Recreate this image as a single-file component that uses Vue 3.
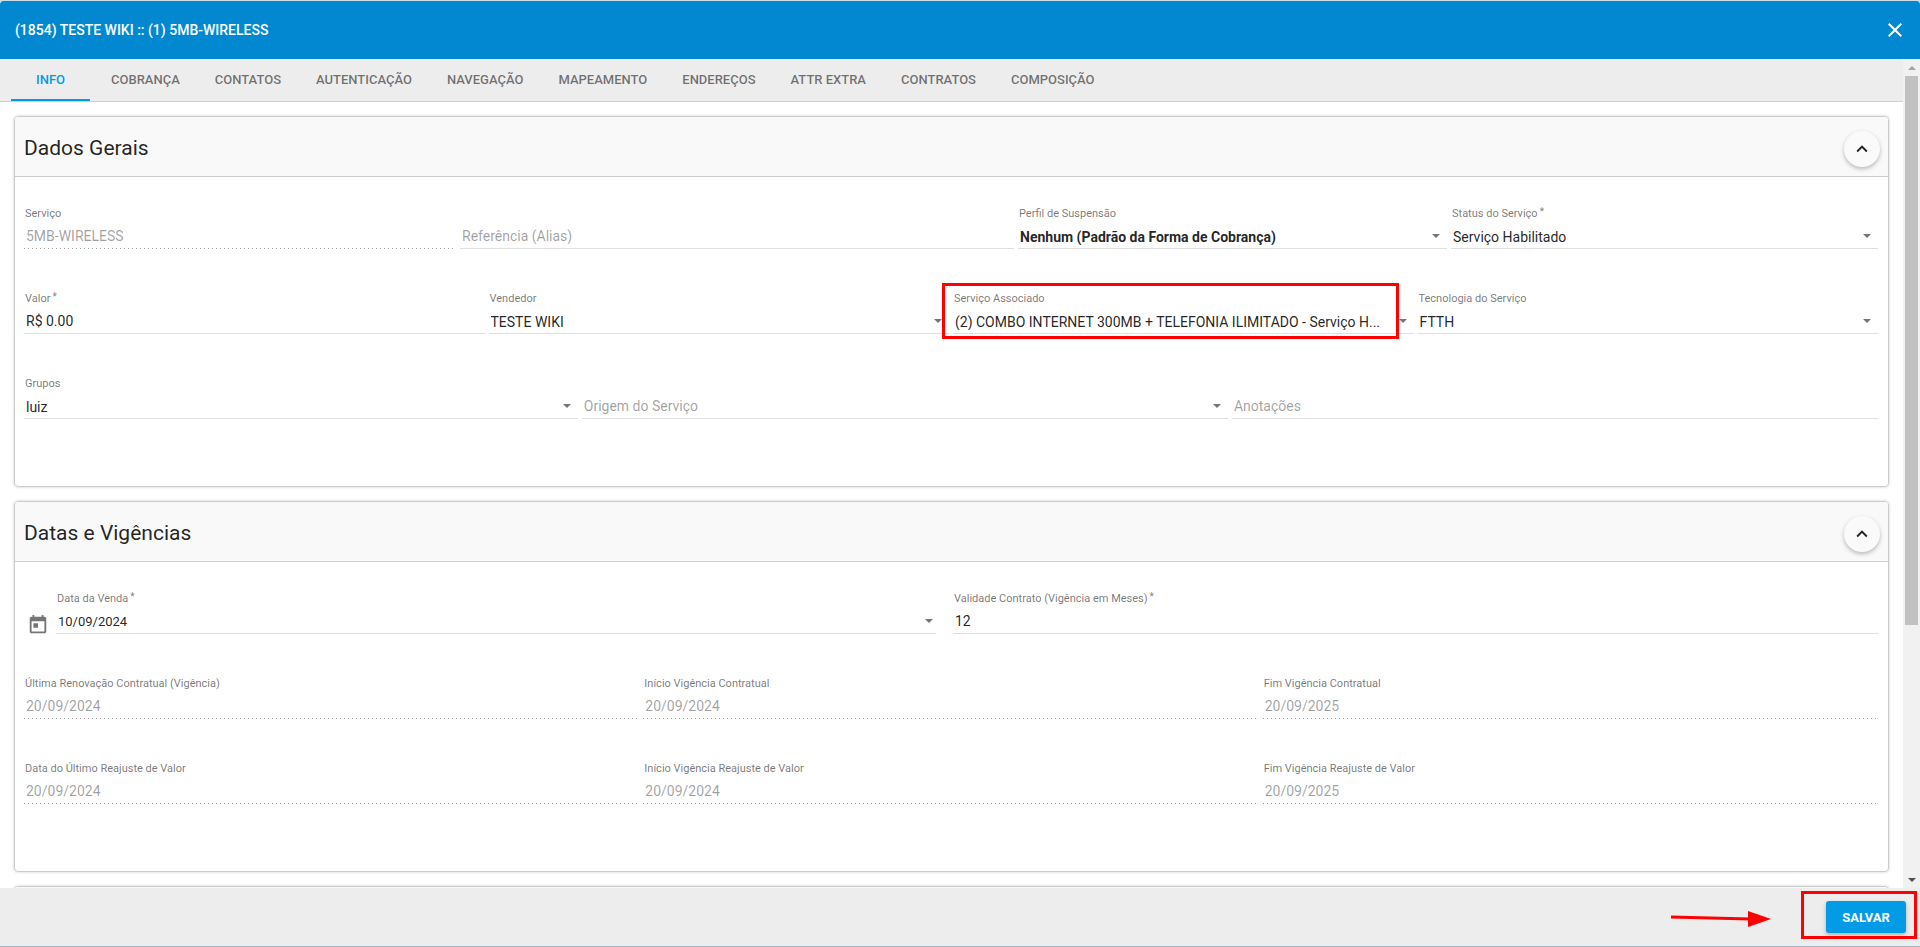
<script setup>
import { ref } from 'vue'

const tabs = ['INFO', 'COBRANÇA', 'CONTATOS', 'AUTENTICAÇÃO', 'NAVEGAÇÃO', 'MAPEAMENTO', 'ENDEREÇOS', 'ATTR EXTRA', 'CONTRATOS', 'COMPOSIÇÃO']
const activeTab = ref('INFO')

const panels = [
  {
    title: 'Dados Gerais',
    rows: [
      {
        layout: 'profile',
        fields: [
          { id: 'servico', label: 'Serviço', value: '5MB-WIRELESS', disabled: true },
          { id: 'alias', placeholder: 'Referência (Alias)', value: '' },
          { id: 'suspensao', label: 'Perfil de Suspensão', value: 'Nenhum (Padrão da Forma de Cobrança)', select: true, bold: true },
          { id: 'status', label: 'Status do Serviço', required: true, value: 'Serviço Habilitado', select: true }
        ]
      },
      {
        layout: 'quarters',
        fields: [
          { id: 'valor', label: 'Valor', required: true, value: 'R$ 0.00' },
          { id: 'vendedor', label: 'Vendedor', value: 'TESTE WIKI', select: true },
          { id: 'associado', label: 'Serviço Associado', value: '(2) COMBO INTERNET 300MB + TELEFONIA ILIMITADO - Serviço H...', select: true, marked: true },
          { id: 'tecnologia', label: 'Tecnologia do Serviço', value: 'FTTH', select: true }
        ]
      },
      {
        layout: 'groups',
        fields: [
          { id: 'grupos', label: 'Grupos', value: 'luiz', select: true },
          { id: 'origem', placeholder: 'Origem do Serviço', value: 'Origem do Serviço', select: true },
          { id: 'anotacoes', placeholder: 'Anotações', value: '' }
        ]
      }
    ]
  },
  {
    title: 'Datas e Vigências',
    rows: [
      {
        layout: 'halves',
        fields: [
          { id: 'venda', label: 'Data da Venda', required: true, value: '10/09/2024', date: true },
          { id: 'validade', label: 'Validade Contrato (Vigência em Meses)', required: true, value: '12' }
        ]
      },
      {
        layout: 'thirds',
        fields: [
          { id: 'renovacao', label: 'Última Renovação Contratual (Vigência)', value: '20/09/2024', disabled: true },
          { id: 'inicio-contratual', label: 'Início Vigência Contratual', value: '20/09/2024', disabled: true },
          { id: 'fim-contratual', label: 'Fim Vigência Contratual', value: '20/09/2025', disabled: true }
        ]
      },
      {
        layout: 'thirds',
        fields: [
          { id: 'reajuste', label: 'Data do Último Reajuste de Valor', value: '20/09/2024', disabled: true },
          { id: 'inicio-reajuste', label: 'Início Vigência Reajuste de Valor', value: '20/09/2024', disabled: true },
          { id: 'fim-reajuste', label: 'Fim Vigência Reajuste de Valor', value: '20/09/2025', disabled: true }
        ]
      }
    ]
  },
  { title: '', rows: [] }
]
</script>

<template>
  <div class="dialog">
    <header class="toolbar">
      <h1>(1854) TESTE WIKI :: (1) 5MB-WIRELESS</h1>
      <button class="close" type="button" aria-label="Fechar">
        <svg viewBox="0 0 24 24"><path d="M19 6.41L17.59 5 12 10.59 6.41 5 5 6.41 10.59 12 5 17.59 6.41 19 12 13.41 17.59 19 19 17.59 13.41 12z" /></svg>
      </button>
    </header>

    <div class="viewport">
      <main class="content">
        <nav class="tabs">
          <button
            v-for="tab in tabs"
            :key="tab"
            type="button"
            class="tab"
            :class="{ active: tab === activeTab }"
            @click="activeTab = tab"
          >{{ tab }}</button>
        </nav>

        <div class="panels">
          <section v-for="panel in panels" :key="panel.title" class="panel">
            <div class="panel-head">
              <h2>{{ panel.title }}</h2>
              <button v-if="panel.title" class="fab" type="button" aria-label="Recolher">
                <svg viewBox="0 0 24 24"><path d="M7.41 15.41L12 10.83l4.59 4.58L18 14l-6-6-6 6z" /></svg>
              </button>
            </div>
            <div class="panel-body">
              <div v-for="(row, r) in panel.rows" :key="r" class="row" :class="row.layout">
                <div v-for="f in row.fields" :key="f.id" class="cell" :class="{ dated: f.date }">
                  <svg v-if="f.date" class="calendar" viewBox="0 0 24 24"><path d="M19 3h-1V1h-2v2H8V1H6v2H5c-1.110 0-1.990.9-1.990 2L3 19c0 1.100.89 2 2 2h14c1.100 0 2-.9 2-2V5c0-1.100-.9-2-2-2zm0 16H5V8h14v11zM7 10h5v5H7z" /></svg>
                  <div class="field" :class="{ disabled: f.disabled, marked: f.marked }">
                    <label v-if="f.label" :for="f.id">{{ f.label }}<span v-if="f.required" class="star">*</span></label>
                    <select v-if="f.select" :id="f.id" :class="{ bold: f.bold, empty: f.placeholder }" :aria-label="f.placeholder">
                      <option>{{ f.value }}</option>
                    </select>
                    <input v-else :id="f.id" type="text" :value="f.value" :placeholder="f.placeholder" :aria-label="f.placeholder" :disabled="f.disabled" />
                    <span v-if="f.select || f.date" class="caret"></span>
                  </div>
                </div>
              </div>
            </div>
          </section>
        </div>
      </main>

      <div class="scrollbar">
        <span class="step up"></span>
        <div class="track"><div class="thumb"></div></div>
        <span class="step down"></span>
      </div>
    </div>

    <footer class="actions">
      <svg class="pointer" viewBox="0 0 102 20">
        <path d="M1 10L80 12" stroke="#f00" stroke-width="3" fill="none" />
        <path d="M78 4L101 12L78 20z" fill="#f00" />
      </svg>
      <div class="save-wrap">
        <button class="save" type="button">SALVAR</button>
      </div>
    </footer>
  </div>
</template>

<style>
html,
body {
  margin: 0;
  background: #cfdce3;
}
</style>

<style scoped>
* {
  box-sizing: border-box;
}
.dialog {
  display: flex;
  flex-direction: column;
  height: 100vh;
  padding-top: 1px;
  border-bottom: 1px solid #a9b7c3;
  font-family: Roboto, "Liberation Sans", sans-serif;
  color: rgba(0, 0, 0, 0.87);
}
button,
input,
select {
  font-family: inherit;
  color: inherit;
  border: 0;
  background: none;
  margin: 0;
  padding: 0;
  outline: 0;
}
button {
  cursor: pointer;
}
svg {
  display: block;
  fill: currentColor;
}
.toolbar {
  display: flex;
  flex: none;
  align-items: center;
  justify-content: space-between;
  height: 58px;
  padding: 0 13px 0 15px;
  border-radius: 4px 4px 0 0;
  background: #0288d1;
  color: #fff;
}
h1 {
  margin: 0;
  font-size: 14px;
  font-weight: 500;
}
.close svg {
  width: 24px;
  height: 24px;
}
.viewport {
  display: flex;
  flex: 1;
  min-height: 0;
  background: #fff;
}
.content {
  flex: 1;
  min-width: 0;
  overflow: hidden;
}
.tabs {
  display: flex;
  gap: 1px;
  height: 43px;
  padding-left: 8px;
  border-bottom: 1px solid #cfcfcf;
  background: #ededed;
}
.tab {
  position: relative;
  min-width: 85px;
  padding: 0 17px 2px;
  font-size: 13px;
  font-weight: 500;
  color: rgba(0, 0, 0, 0.54);
  white-space: nowrap;
}
.tab.active {
  color: #039be5;
}
.tab.active::after {
  content: "";
  position: absolute;
  inset: auto 3px 0;
  height: 2px;
  background: #039be5;
}
.panels {
  display: grid;
  gap: 14px;
  padding: 14px;
}
.panel {
  border: 1px solid #cbcbcb;
  border-radius: 4px;
  box-shadow: 0 0 3px rgba(0, 0, 0, 0.2);
}
.panel-head {
  display: flex;
  align-items: center;
  justify-content: space-between;
  height: 60px;
  padding: 4px 8px 0 9px;
  border-bottom: 1px solid #cbcbcb;
  border-radius: 3px 3px 0 0;
  background: #f9f9f9;
}
h2 {
  margin: 0;
  padding-bottom: 2px;
  font-size: 21px;
  font-weight: 400;
}
.fab {
  display: grid;
  place-items: center;
  width: 36px;
  height: 36px;
  border-radius: 50%;
  background: #fafafa;
  box-shadow: 0 2px 4px rgba(0, 0, 0, 0.26);
}
.fab svg {
  width: 22px;
  height: 22px;
}
.panel-body {
  display: grid;
  gap: 41px;
  padding: 28px 10px 67px 9px;
}
.row {
  display: grid;
  gap: 4px;
}
.profile {
  grid-template-columns: 432fr 554fr 429fr 427fr;
}
.quarters {
  grid-template-columns: repeat(4, minmax(0, 1fr));
}
.groups {
  grid-template-columns: 6fr 7fr 7fr;
}
.halves {
  grid-template-columns: repeat(2, minmax(0, 1fr));
}
.thirds {
  grid-template-columns: repeat(3, minmax(0, 1fr));
}
.cell {
  display: flex;
  align-items: flex-end;
  height: 44px;
  min-width: 0;
}
.field {
  position: relative;
  flex: 1;
  min-width: 0;
  border-bottom: 1px solid #dfdfdf;
}
.field.disabled {
  border-bottom: 0;
  padding-bottom: 1px;
  background: linear-gradient(to right, rgba(0, 0, 0, 0.38) 0 33%, transparent 33%) left bottom / 4px 1px repeat-x;
}
label {
  display: block;
  padding-left: 1px;
  font-size: 11px;
  line-height: 16px;
  color: rgba(0, 0, 0, 0.54);
  white-space: nowrap;
}
.star {
  margin-left: 2px;
  font-size: 10px;
  line-height: 1;
  vertical-align: 2px;
}
input,
select {
  display: block;
  width: 100%;
  height: 26px;
  padding: 2px 0 0 2px;
  font-size: 14px;
}
select {
  appearance: none;
  padding: 4px 28px 0 2px;
}
input:disabled {
  color: rgba(0, 0, 0, 0.38);
}
input::placeholder,
.empty {
  color: rgba(0, 0, 0, 0.38);
}
select.empty {
  padding-top: 2px;
}
.bold {
  font-weight: 700;
}
.caret {
  position: absolute;
  right: 7px;
  bottom: 10px;
  border: 4px solid transparent;
  border-top: 4px solid #757575;
  border-bottom: 0;
  pointer-events: none;
}
.dated {
  padding-right: 13px;
}
.dated input {
  font-size: 13px;
}
.dated .caret {
  right: 3px;
}
.calendar {
  flex: none;
  width: 22px;
  height: 22px;
  margin: 0 7px -2px 3px;
  color: #757575;
}
.marked::after {
  content: "";
  position: absolute;
  inset: -8px 15px -6px -11px;
  border: 3px solid #f00;
  pointer-events: none;
}
.scrollbar {
  display: flex;
  flex: none;
  flex-direction: column;
  width: 17px;
  padding: 0 2px;
  background: #f1f1f1;
}
.step {
  display: grid;
  place-items: center;
  height: 17px;
}
.step::after {
  content: "";
  border: 4px solid transparent;
}
.up::after {
  border-top: 0;
  border-bottom-color: #a3a3a3;
}
.down::after {
  border-bottom: 0;
  border-top-color: #505050;
}
.track {
  flex: 1;
}
.thumb {
  height: 69%;
  background: #c1c1c1;
}
.actions {
  display: flex;
  flex: none;
  align-items: center;
  justify-content: flex-end;
  gap: 54px;
  height: 58px;
  padding-right: 14px;
  background: #ededed;
}
.pointer {
  width: 102px;
  height: 20px;
}
.save-wrap {
  position: relative;
}
.save-wrap::after {
  content: "";
  position: absolute;
  inset: -10px -11px -6px -25px;
  border: 3px solid #f00;
  pointer-events: none;
}
.save {
  display: block;
  width: 80px;
  height: 32px;
  border-radius: 3px;
  background: #039be5;
  box-shadow: 0 2px 4px rgba(0, 0, 0, 0.26);
  color: #fff;
  font-size: 13px;
  font-weight: 700;
}
</style>
